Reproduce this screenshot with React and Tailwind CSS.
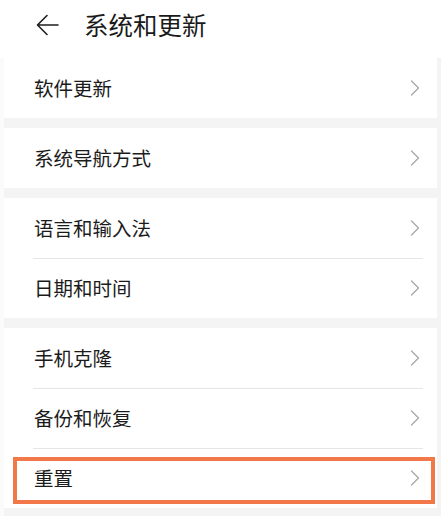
import React from "react";

const groups = [
  ["软件更新"],
  ["系统导航方式"],
  ["语言和输入法", "日期和时间"],
  ["手机克隆", "备份和恢复", "重置"],
];

function Chevron() {
  return (
    <svg width="10" height="16" viewBox="0 0 10 16" className="shrink-0">
      <polyline
        points="1.5,1 8.5,8 1.5,15"
        fill="none"
        stroke="#a8a8a8"
        strokeWidth="1.3"
        strokeLinecap="round"
        strokeLinejoin="round"
      />
    </svg>
  );
}

function Row({ label, divider, marked }) {
  return (
    <div className="relative h-[60px] flex items-center pl-[30px] pr-[17px]">
      {divider && (
        <div className="absolute top-0 left-[29px] right-[14px] h-px bg-[#e6e6e6]" />
      )}
      <span className="flex-1 text-[19.5px] text-[#1b1b1b] leading-none">
        {label}
      </span>
      <Chevron />
      {/* highlight frame around the target row */}
      {marked && (
        <div className="absolute left-[9px] right-[2px] top-[9px] bottom-[4px] border-4 border-[#f2784a]" />
      )}
    </div>
  );
}

export default function App() {
  return (
    <div
      className="w-[441px] h-[516px] overflow-hidden bg-[#fbfbfb]"
      style={{ fontFamily: '"Noto Sans CJK SC", "Noto Sans", sans-serif' }}
    >
      {/* Header */}
      <div className="h-[58px] bg-white flex items-center pl-[36px]">
        <svg width="24" height="22" viewBox="0 0 24 22" className="mb-[8px]">
          <path
            d="M22 11H2M11 1.5L1.5 11 11 20.5"
            fill="none"
            stroke="#1e1e1e"
            strokeWidth="1.6"
            strokeLinecap="round"
            strokeLinejoin="round"
          />
        </svg>
        <h1 className="ml-[24px] mb-[8px] text-[24.5px] font-normal text-[#1a1a1a] leading-none">
          系统和更新
        </h1>
      </div>

      <div className="pl-[4px] h-full">
        <div className="flex flex-col gap-[10px] pr-[4px] bg-[#f4f4f4] h-full">
          {groups.map((items, gi) => (
            <div key={gi} className="bg-white">
              {items.map((label, i) => (
                <Row
                  key={label}
                  label={label}
                  divider={i > 0}
                  marked={label === "重置"}
                />
              ))}
            </div>
          ))}
        </div>
      </div>
    </div>
  );
}
